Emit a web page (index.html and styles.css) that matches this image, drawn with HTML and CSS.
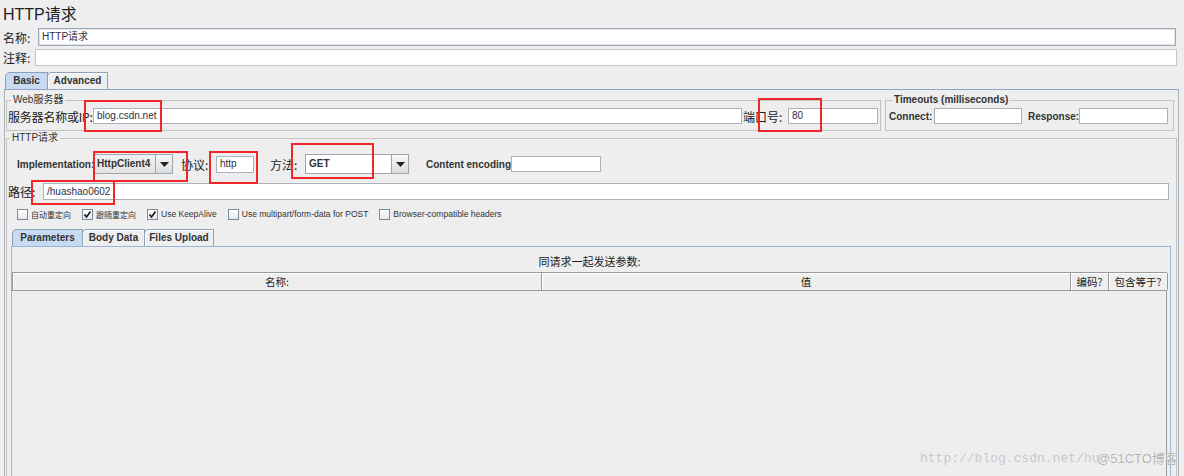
FILE: index.html
```html
<!DOCTYPE html>
<html>
<head>
<meta charset="utf-8">
<title>HTTP请求</title>
<link rel="stylesheet" href="styles.css">
</head>
<body>
<div class="title">HTTP请求</div>
<div class="frow name-row"><span class="flbl name-lbl">名称:</span><div class="input name-input">HTTP请求</div></div>
<div class="frow comment-row"><span class="flbl comment-lbl">注释:</span><div class="input comment-input"></div></div>
<div class="tabs main-tabs"><div class="tab active tab-basic">Basic</div><div class="tab tab-adv">Advanced</div></div>
<div class="tabpanel">
  <div class="server-row">
    <fieldset class="group web">
      <legend>Web服务器</legend>
      <div class="line">
        <span class="lbl server-lbl">服务器名称或IP:</span>
        <div class="input server-input">blog.csdn.net</div>
        <span class="lbl port-lbl">端口号:</span>
        <div class="input port-input">80</div>
      </div>
    </fieldset>
    <fieldset class="group timeouts">
      <legend>Timeouts (milliseconds)</legend>
      <div class="line">
        <span class="blbl connect-lbl">Connect:</span>
        <div class="input t-input connect-input"></div>
        <span class="blbl response-lbl">Response:</span>
        <div class="input t-input response-input"></div>
      </div>
    </fieldset>
  </div>
  <fieldset class="group http">
    <legend>HTTP请求</legend>
    <div class="impl-row">
      <span class="blbl impl-lbl">Implementation:</span>
      <div class="combo impl-combo"><span class="combo-text">HttpClient4</span><span class="combo-btn"><svg width="9" height="5" viewBox="0 0 9 5"><path d="M0 0h9L4.5 5z" fill="#222"/></svg></span></div>
      <span class="lbl proto-lbl">协议:</span>
      <div class="input proto-input">http</div>
      <span class="lbl method-lbl">方法:</span>
      <div class="combo method-combo"><span class="combo-text">GET</span><span class="combo-btn"><svg width="9" height="5" viewBox="0 0 9 5"><path d="M0 0h9L4.5 5z" fill="#222"/></svg></span></div>
      <span class="blbl enc-lbl">Content encoding:</span>
      <div class="input enc-input"></div>
    </div>
    <div class="path-row">
      <span class="lbl path-lbl">路径:</span>
      <div class="input path-input">/huashao0602</div>
    </div>
    <div class="checks">
      <label class="chk"><span class="box"></span><span class="ctext cjk">自动重定向</span></label>
      <label class="chk"><span class="box"><svg width="9" height="9" viewBox="0 0 9 9"><path d="M1.5 4.5l2 2.5 4-5.5" stroke="#111" stroke-width="1.6" fill="none"/></svg></span><span class="ctext cjk">跟随重定向</span></label>
      <label class="chk"><span class="box"><svg width="9" height="9" viewBox="0 0 9 9"><path d="M1.5 4.5l2 2.5 4-5.5" stroke="#111" stroke-width="1.6" fill="none"/></svg></span><span class="ctext">Use KeepAlive</span></label>
      <label class="chk"><span class="box"></span><span class="ctext">Use multipart/form-data for POST</span></label>
      <label class="chk"><span class="box"></span><span class="ctext">Browser-compatible headers</span></label>
    </div>
    <div class="tabs sub-tabs"><div class="tab active tab-params">Parameters</div><div class="tab tab-body">Body Data</div><div class="tab tab-files">Files Upload</div></div>
    <div class="param-panel">
      <div class="caption">同请求一起发送参数:</div>
      <div class="table">
        <div class="thead">
          <div class="th c-name">名称:</div>
          <div class="th c-val">值</div>
          <div class="th c-enc">编码?</div>
          <div class="th c-eq">包含等于?</div>
        </div>
        <div class="tbody"></div>
      </div>
    </div>
  </fieldset>
</div>

<div class="mark m-server"></div>
<div class="mark m-port"></div>
<div class="mark m-impl"></div>
<div class="mark m-proto"></div>
<div class="mark m-method"></div>
<div class="mark m-path"></div>

<div class="wm-url">http://blog.csdn.net/hu</div>
<div class="wm-51">@51CTO博客</div>
</body>
</html>
```

FILE: styles.css
```css
* { box-sizing: border-box; }
html, body { margin: 0; padding: 0; }
body {
  background: #eeeeee;
  width: 1184px;
  height: 476px;
  overflow: hidden;
  position: relative;
  font-family: "Liberation Sans", "Noto Sans CJK SC", sans-serif;
  font-size: 10px;
  color: #333;
}

.title {
  height: 28px;
  padding: 5px 0 0 3px;
  font-size: 16px;
  line-height: 20px;
  color: #1e1e1e;
}

.frow { display: flex; align-items: center; }
.flbl { font-family: "Noto Sans CJK SC", sans-serif; font-size: 12px; color: #222; padding-left: 3px; flex: none; white-space: nowrap; }

.input {
  background: #fff;
  border: 1px solid #a9b3be;
  font-size: 10px;
  line-height: 14px;
  padding: 0 3px;
  color: #2d3144;
  white-space: nowrap;
  overflow: hidden;
  flex: none;
  display: flex;
  align-items: center;
  font-family: "Liberation Sans", "Noto Sans CJK SC", sans-serif;
}

.name-row { height: 18px; }
.name-lbl { width: 38px; }
.name-input { width: 1138px; height: 18px; border-color: #9fabb9; box-shadow: inset 0 0 0 1px #dfe4ea; }

.comment-row { height: 17px; margin-top: 3px; }
.comment-lbl { width: 35px; }
.comment-input { width: 1142px; height: 17px; border-color: #c6c6c6; }

.tabs { display: flex; align-items: flex-end; }
.tab {
  height: 17px;
  border: 1px solid #8d9fb9;
  border-bottom: none;
  border-top-left-radius: 5px;
  background: #eeeeee;
  font-weight: bold;
  font-size: 10px;
  line-height: 16px;
  color: #333;
  text-align: center;
  white-space: nowrap;
  box-shadow: inset 1px 1px 0 #fff;
}
.tab.active { background: #c8daef; box-shadow: none; }

.main-tabs { margin-top: 6px; padding-left: 5px; height: 17px; }
.tab-basic { width: 43px; }
.tab-adv { width: 61px; margin-left: -1px; }

.tabpanel {
  margin-left: 4px;
  width: 1175px;
  height: 400px;
  border-top: 1px solid #8fa5c4;
  border-left: 1px solid #a9b3be;
  border-right: 1px solid #a9b3be;
  padding: 3px 0 0 1px;
}

.group {
  margin: 0;
  padding: 0;
  border: 1px solid #c3c3c3;
  min-inline-size: 0;
}
.group legend {
  padding: 0 2px;
  margin-left: 3px;
  font-size: 10px;
  line-height: 14px;
  color: #333;
}

.server-row { display: flex; gap: 4px; }
.web { width: 875px; padding: 0 1px 5px 1px; }
.timeouts { width: 289px; padding: 0 3px 5px 3px; }
.timeouts legend { font-weight: bold; }

.line { display: flex; align-items: center; height: 18px; }
.lbl { font-family: "Noto Sans CJK SC", sans-serif; font-size: 12px; color: #222; white-space: nowrap; flex: none; }
.blbl { font-weight: bold; font-size: 10px; color: #333; white-space: nowrap; flex: none; }

.server-lbl { width: 85px; letter-spacing: -0.2px; }
.server-input { width: 649px; height: 16px; }
.port-lbl { width: 46px; padding-left: 1px; }
.port-input { width: 90px; height: 16px; }

.connect-lbl { width: 45px; }
.t-input { height: 16px; }
.connect-input { width: 88px; }
.response-lbl { width: 57px; padding-left: 6px; }
.response-input { width: 89px; }

.http { width: 1171px; padding: 9px 0 0 0; height: 360px; }

.impl-row { display: flex; align-items: center; height: 20px; margin-left: 10px; }
.impl-lbl { width: 76px; }
.combo {
  display: flex;
  height: 20px;
  border: 1px solid #9ba6b3;
  background: #fff;
  flex: none;
}
.combo-text {
  flex: 1;
  font-weight: bold;
  font-size: 10px;
  line-height: 18px;
  padding-left: 3px;
  color: #333;
}
.combo-btn {
  width: 17px;
  border-left: 1px solid #9ba6b3;
  background: linear-gradient(#f8f8f8, #dcdcdc);
  display: flex;
  align-items: center;
  justify-content: center;
}
.impl-combo { width: 80px; }
.impl-combo .combo-text { background: linear-gradient(#f2f2f2, #e2e2e2); }
.proto-lbl { width: 43px; padding-left: 8px; }
.proto-input { width: 38px; height: 17px; }
.method-lbl { width: 51px; padding-left: 16px; }
.method-combo { width: 104px; }
.enc-lbl { width: 102px; padding-left: 17px; }
.enc-input { width: 90px; height: 16px; }

.path-row { display: flex; align-items: center; height: 17px; margin-top: 9px; margin-left: 1px; }
.path-lbl { width: 35px; }
.path-input { width: 1126px; height: 17px; }

.checks { display: flex; align-items: center; gap: 11px; height: 12px; margin-top: 8px; margin-left: 10px; }
.chk { display: flex; align-items: center; gap: 3px; }
.box {
  width: 11px; height: 11px;
  border: 1px solid #7d8a99;
  background: linear-gradient(#ffffff, #e4e8ee);
  display: flex; align-items: center; justify-content: center;
}
.ctext { font-size: 8.5px; color: #333; white-space: nowrap; }
.ctext.cjk { font-family: "Noto Sans CJK SC", sans-serif; font-size: 8px; }

.sub-tabs { margin-top: 9px; margin-left: 5px; height: 17px; }
.tab-params { width: 71px; }
.tab-body { width: 63px; margin-left: -1px; }
.tab-files { width: 70px; margin-left: -1px; }

.param-panel {
  margin-left: 4px;
  width: 1160px;
  height: 240px;
  border-top: 1px solid #9bb4da;
  border-left: 1px solid #a9b3be;
  border-right: 1px solid #9bb4da;
  padding: 7px 3px 0 0;
}
.caption {
  text-align: center;
  font-family: "Noto Sans CJK SC", sans-serif;
  font-size: 11px;
  line-height: 14px;
  color: #222;
}
.table { margin-top: 4px; width: 1155px; }
.thead {
  display: grid;
  grid-template-columns: 529px 529px 38px 59px;
  height: 19px;
  border-top: 1px solid #9a9a9a;
  border-bottom: 1px solid #9a9a9a;
  border-left: 1px solid #9a9a9a;
}
.th {
  border-right: 1px solid #9a9a9a;
  font-family: "Noto Sans CJK SC", sans-serif;
  font-size: 10.5px;
  line-height: 17px;
  text-align: center;
  color: #222;
  white-space: nowrap;
  box-shadow: inset 1px 1px 0 #fff;
}
.tbody { height: 200px; border-right: 1px solid #9a9a9a; }

.mark {
  position: absolute;
  border: 2px solid #f0262b;
}
.m-server { left: 84px; top: 100px; width: 78px; height: 32px; }
.m-port { left: 758px; top: 98px; width: 64px; height: 34px; }
.m-impl { left: 93px; top: 151px; width: 95px; height: 31px; }
.m-proto { left: 209px; top: 151px; width: 49px; height: 33px; }
.m-method { left: 291px; top: 143px; width: 83px; height: 36px; }
.m-path { left: 31px; top: 180px; width: 84px; height: 25px; }

.wm-url {
  position: absolute;
  left: 920px;
  top: 451px;
  font-family: "Liberation Mono", monospace;
  font-size: 13px;
  line-height: 16px;
  color: #c9c9c9;
}
.wm-51 {
  position: absolute;
  left: 1097px;
  top: 451px;
  font-family: "Liberation Sans", "Noto Sans CJK SC", sans-serif;
  font-size: 13px;
  line-height: 16px;
  color: #b3b3b3;
  text-shadow: 0 0 1px #fff;
}
```
